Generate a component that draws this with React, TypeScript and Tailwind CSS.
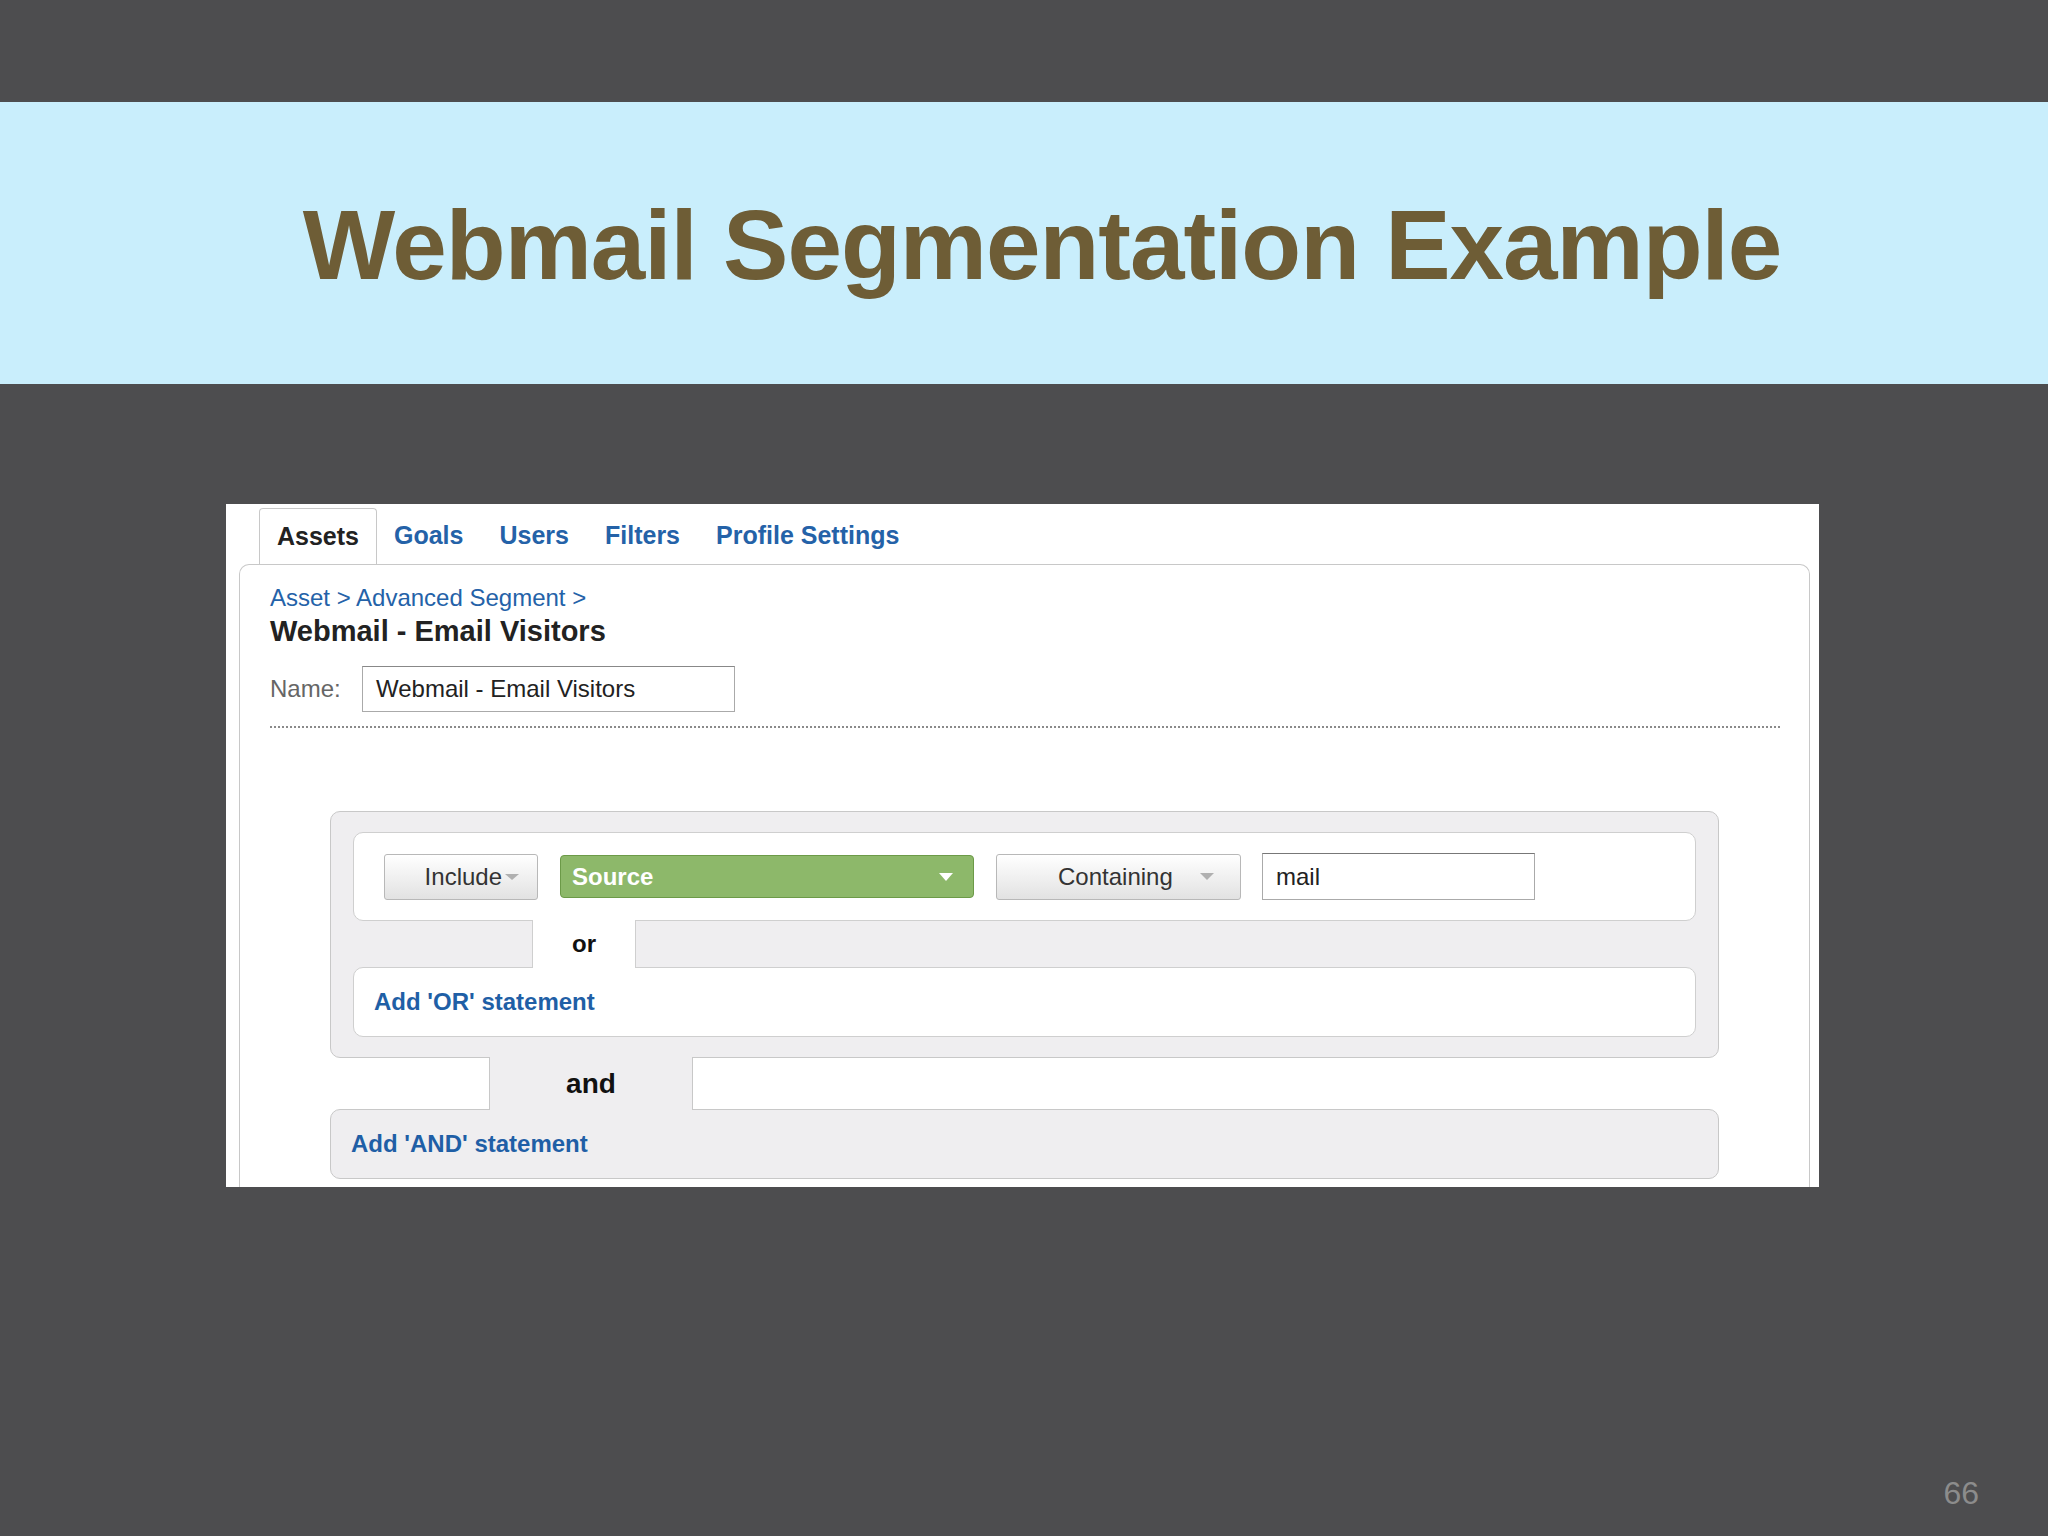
import React from "react";

const Caret = ({ color, w = 14, h = 7 }: { color: string; w?: number; h?: number }) => (
  <svg width={w} height={h} viewBox={`0 0 ${w} ${h}`} className="flex-none">
    <path d={`M0 0H${w}L${w / 2} ${h}Z`} fill={color} />
  </svg>
);

export default function App() {
  return (
    <div className="w-[2048px] h-[1536px] bg-[#4d4d4f] flex flex-col font-['Liberation_Sans',Arial,sans-serif]">
      <div className="h-[102px] flex-none" />

      {/* Title band */}
      <div className="h-[282px] flex-none bg-[#c9eefc] flex items-center justify-center pl-[36px] pt-[4px]">
        <h1 className="text-[98px] leading-none font-bold tracking-[-1px] text-[#6e5d36]">
          Webmail Segmentation Example
        </h1>
      </div>

      <div className="h-[120px] flex-none" />

      {/* Screenshot panel */}
      <div className="ml-[226px] w-[1593px] h-[683px] flex-none bg-white flex flex-col overflow-hidden">
        {/* Tabs */}
        <div className="flex pt-[4px] pl-[33px]">
          <div className="relative z-10 -mb-px h-[56px] px-[17px] flex items-center bg-white border border-b-0 border-[#c8c8c8] rounded-t-[4px] text-[25px] font-bold text-[#222]">
            Assets
          </div>
          <div className="ml-[17px] h-[56px] flex items-center gap-[36px] text-[25px] font-bold text-[#2462a8]">
            <span>Goals</span>
            <span>Users</span>
            <span>Filters</span>
            <span>Profile Settings</span>
          </div>
        </div>

        {/* Content box */}
        <div className="ml-[13px] w-[1571px] flex-1 border border-b-0 border-[#c8c8c8] rounded-t-[10px] flex flex-col">
          <div className="pl-[30px]">
            <div className="mt-[19px] text-[24px] leading-[28px] text-[#2462a8]">
              Asset &gt; Advanced Segment &gt;
            </div>
            <div className="mt-[2px] text-[29px] leading-[34px] font-bold text-[#222]">
              Webmail - Email Visitors
            </div>
            <div className="mt-[18px] flex items-center">
              <span className="w-[92px] text-[24px] text-[#666]">Name:</span>
              <div className="w-[373px] h-[46px] border border-[#aaa] border-t-[#888] pl-[13px] flex items-center text-[24px] text-[#222]">
                Webmail - Email Visitors
              </div>
            </div>
            <div className="mt-[14px] w-[1510px] border-t-2 border-dotted border-[#8a8a8a]" />
          </div>

          {/* OR group */}
          <div className="mt-[83px] ml-[90px] w-[1389px] bg-[#efeef0] border border-[#c8c8c8] rounded-[10px] pt-[20px] px-[22px] pb-[20px] flex flex-col">
            <div className="h-[89px] bg-white border border-[#cfcfcf] rounded-[10px] flex items-center pl-[30px]">
              <div className="w-[154px] h-[46px] border border-[#b8b8b8] rounded-[3px] bg-gradient-to-b from-white to-[#e2e2e2] flex items-center justify-end pr-[18px] gap-[3px] text-[24px] text-[#333]">
                <span>Include</span>
                <Caret color="#b0b0b0" w={14} h={6} />
              </div>
              <div className="ml-[22px] w-[414px] h-[43px] bg-[#8db86a] border border-[#6c9a48] rounded-[4px] flex items-center justify-between pl-[11px] pr-[20px] text-[24px] font-bold text-white">
                <span>Source</span>
                <Caret color="#ffffff" w={14} h={8} />
              </div>
              <div className="ml-[22px] w-[245px] h-[46px] border border-[#b8b8b8] rounded-[3px] bg-gradient-to-b from-white to-[#e2e2e2] flex items-center pl-[61px] text-[24px] text-[#333]">
                <span>Containing</span>
                <span className="ml-[27px]">
                  <Caret color="#b0b0b0" w={14} h={7} />
                </span>
              </div>
              <div className="ml-[21px] w-[273px] h-[47px] border border-[#aaa] border-t-[#777] pl-[13px] flex items-center text-[24px] text-[#222]">
                mail
              </div>
            </div>

            <div className="h-[46px] flex">
              <div className="w-[180px] border-r border-[#cfcfcf]" />
              <div className="relative z-10 -my-px w-[102px] bg-white flex items-center justify-center text-[24px] font-bold text-[#111]">
                or
              </div>
              <div className="flex-1 border-l border-[#cfcfcf]" />
            </div>

            <div className="h-[70px] bg-white border border-[#cfcfcf] rounded-[10px] flex items-center pl-[20px] text-[24px] font-bold text-[#1f5fa6]">
              Add 'OR' statement
            </div>
          </div>

          {/* AND connector */}
          <div className="ml-[90px] w-[1389px] h-[51px] flex">
            <div className="w-[160px] border-r border-[#c8c8c8]" />
            <div className="relative z-10 -my-px w-[202px] bg-[#efeef0] flex items-center justify-center text-[28px] font-bold text-[#111]">
              and
            </div>
            <div className="flex-1 border-l border-[#c8c8c8]" />
          </div>

          <div className="ml-[90px] w-[1389px] h-[70px] bg-[#efeef0] border border-[#c8c8c8] rounded-[10px] flex items-center pl-[20px] text-[24px] font-bold text-[#1f5fa6]">
            Add 'AND' statement
          </div>
        </div>
      </div>

      {/* Page number */}
      <div className="flex-1 flex items-end justify-end pr-[69px] pb-[27px]">
        <span className="text-[32px] leading-[32px] text-[#8c8c8c]">66</span>
      </div>
    </div>
  );
}
